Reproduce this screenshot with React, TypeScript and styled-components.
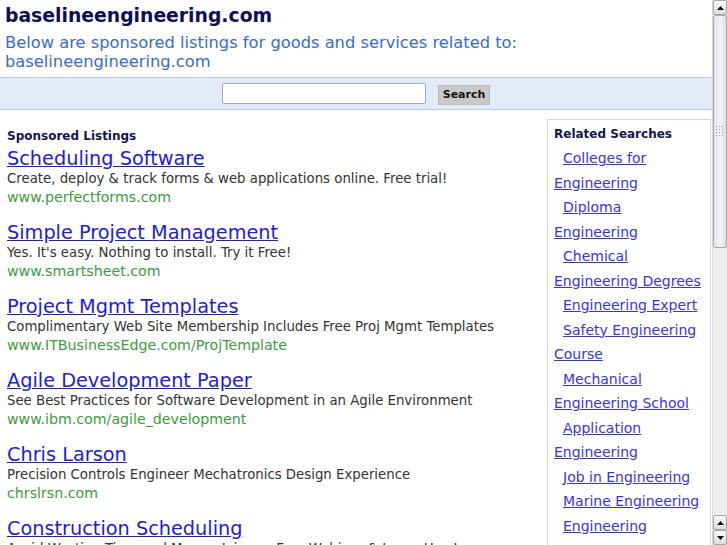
import React from 'react';
import styled, { createGlobalStyle } from 'styled-components';

const GlobalStyle = createGlobalStyle`
  html, body {
    margin: 0;
    padding: 0;
    background: #ffffff;
    overflow: hidden;
    font-family: "DejaVu Sans", Verdana, sans-serif;
  }
`;

const Page = styled.div`
  width: 712px;
  height: 545px;
  overflow: hidden;
`;

const Header = styled.div`
  padding: 5px 5px 6px 5px;
`;

const DomainTitle = styled.h1`
  margin: 0;
  font-size: 18.8px;
  line-height: 22px;
  font-weight: bold;
  color: #0d0d5c;
`;

const Intro = styled.div`
  margin-top: 6px;
  font-size: 16.3px;
  line-height: 19px;
  color: #3a6bd3;
`;

const SearchBand = styled.form`
  display: flex;
  justify-content: center;
  align-items: center;
  gap: 12px;
  height: 31px;
  background: #e4ebf8;
  border-top: 1px solid #b9cbee;
  border-bottom: 1px solid #b9cbee;
`;

const SearchInput = styled.input`
  box-sizing: border-box;
  width: 204px;
  height: 21px;
  margin: 0;
  border: 1px solid #a8a8a8;
  border-radius: 2px;
  background: #ffffff;
`;

const SearchButton = styled.button`
  box-sizing: border-box;
  width: 52px;
  height: 20px;
  margin: 2px 0 0 0;
  padding: 0;
  border: 1px solid #bdbdbd;
  background: #c9c9c9;
  font-family: "DejaVu Sans", Verdana, sans-serif;
  font-size: 11px;
  font-weight: bold;
  color: #111111;
`;

const Body = styled.div`
  display: grid;
  grid-template-columns: 1fr 164px;
  padding-right: 1px;
`;

const Listings = styled.div`
  padding: 19px 0 0 7px;
`;

const ColumnHeading = styled.div`
  font-size: 12px;
  line-height: 14px;
  font-weight: bold;
  color: #141450;
`;

const Listing = styled.div<{ $first?: boolean }>`
  margin-top: ${(p) => (p.$first ? '5px' : '16px')};
`;

const ListingTitle = styled.a`
  display: block;
  font-size: 19.3px;
  line-height: 22px;
  color: #1c1ce0;
  text-decoration: underline;
`;

const ListingText = styled.div`
  font-size: 13.3px;
  line-height: 18px;
  color: #333333;
`;

const ListingUrl = styled.div`
  font-size: 14.2px;
  line-height: 18px;
  color: #3c9d3c;
`;

const Sidebar = styled.div`
  margin-top: 9px;
  padding: 7px 6px 0 6px;
  border: 1px solid #cad8f2;
  border-bottom: none;
`;

const RelatedList = styled.div`
  margin-top: 5px;
`;

const RelatedLink = styled.a`
  display: block;
  text-indent: 9px;
  font-size: 14px;
  line-height: 24.5px;
  color: #3535ee;
  text-decoration: underline;
`;

const Scrollbar = styled.div`
  position: fixed;
  top: 0;
  right: 0;
  width: 15px;
  height: 545px;
  display: flex;
  flex-direction: column;
  background: #f0f0f0;
  border-left: 1px solid #d8d8d8;
  box-sizing: border-box;
`;

const ArrowButton = styled.div`
  flex: 0 0 15px;
  box-sizing: border-box;
  display: flex;
  align-items: center;
  justify-content: center;
  background: linear-gradient(#fafafa, #dcdcdc);
  border: 1px solid #a5a5a5;
  border-radius: 2px;
`;

const Thumb = styled.div`
  flex: 0 0 233px;
  box-sizing: border-box;
  display: flex;
  align-items: center;
  justify-content: center;
  background: linear-gradient(90deg, #e2e4ea, #f2f3f6 50%, #dcdee4);
  border: 1px solid #a9a9a9;
  border-radius: 2px;
`;

const Track = styled.div`
  flex: 1;
  background: #eeeeee;
`;

const Arrow = ({ down }: { down?: boolean }) => (
  <svg width="7" height="4" viewBox="0 0 7 4">
    <path d={down ? 'M0 0h7L3.5 4z' : 'M0 4h7L3.5 0z'} fill="#111" />
  </svg>
);

const Grip = () => (
  <svg width="9" height="11" viewBox="0 0 9 11">
    {[0, 1, 2].map((c) =>
      [0, 1, 2, 3].map((r) => (
        <rect key={`${c}-${r}`} x={c * 3} y={r * 3} width="1" height="1" fill="#9a9ca4" />
      ))
    )}
  </svg>
);

const listings = [
  {
    title: 'Scheduling Software',
    text: 'Create, deploy & track forms & web applications online. Free trial!',
    url: 'www.perfectforms.com',
  },
  {
    title: 'Simple Project Management',
    text: "Yes. It's easy. Nothing to install. Try it Free!",
    url: 'www.smartsheet.com',
  },
  {
    title: 'Project Mgmt Templates',
    text: 'Complimentary Web Site Membership Includes Free Proj Mgmt Templates',
    url: 'www.ITBusinessEdge.com/ProjTemplate',
  },
  {
    title: 'Agile Development Paper',
    text: 'See Best Practices for Software Development in an Agile Environment',
    url: 'www.ibm.com/agile_development',
  },
  {
    title: 'Chris Larson',
    text: 'Precision Controls Engineer Mechatronics Design Experience',
    url: 'chrslrsn.com',
  },
  {
    title: 'Construction Scheduling',
    text: 'Avoid Wasting Time and Money. Join our Free Webinar & Learn How!',
    url: 'www.constructionscheduling.com',
  },
];

const related = [
  'Colleges for Engineering',
  'Diploma Engineering',
  'Chemical Engineering Degrees',
  'Engineering Expert',
  'Safety Engineering Course',
  'Mechanical Engineering School',
  'Application Engineering',
  'Job in Engineering',
  'Marine Engineering',
  'Engineering Management',
];

const App: React.FC = () => {
  return (
    <>
      <GlobalStyle />
      <Page>
        <Header>
          <DomainTitle>baselineengineering.com</DomainTitle>
          <Intro>
            Below are sponsored listings for goods and services related to:
            <br />
            baselineengineering.com
          </Intro>
        </Header>

        <SearchBand onSubmit={(e) => e.preventDefault()}>
          <SearchInput type="text" />
          <SearchButton type="submit">Search</SearchButton>
        </SearchBand>

        <Body>
          <Listings>
            <ColumnHeading>Sponsored Listings</ColumnHeading>
            {listings.map((item, i) => (
              <Listing key={item.title} $first={i === 0}>
                <ListingTitle href="#">{item.title}</ListingTitle>
                <ListingText>{item.text}</ListingText>
                <ListingUrl>{item.url}</ListingUrl>
              </Listing>
            ))}
          </Listings>

          <Sidebar>
            <ColumnHeading>Related Searches</ColumnHeading>
            <RelatedList>
              {related.map((r) => (
                <RelatedLink key={r} href="#">
                  {r}
                </RelatedLink>
              ))}
            </RelatedList>
          </Sidebar>
        </Body>
      </Page>

      <Scrollbar>
        <ArrowButton>
          <Arrow />
        </ArrowButton>
        <Thumb>
          <Grip />
        </Thumb>
        <Track />
        <ArrowButton>
          <Arrow />
        </ArrowButton>
        <ArrowButton>
          <Arrow down />
        </ArrowButton>
      </Scrollbar>
    </>
  );
};

export default App;
